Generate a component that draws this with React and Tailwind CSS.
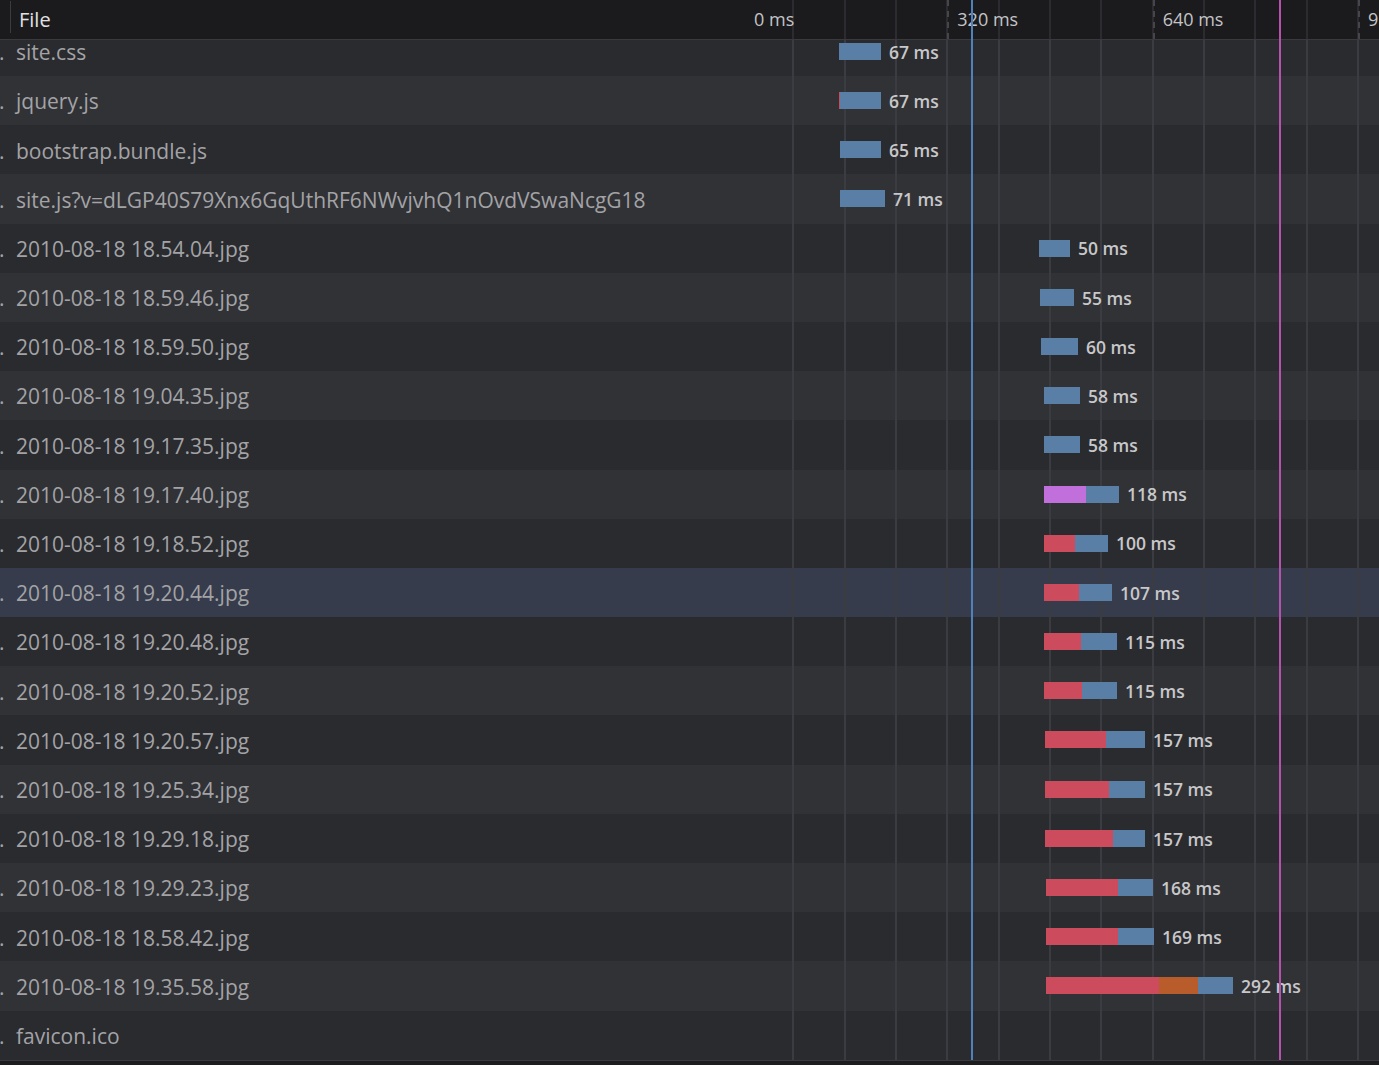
import React from "react";

const BLUE = "#5a7fa6";
const RED = "#cc4b5d";
const PURPLE = "#c06fdb";
const ORANGE = "#b85c2b";
const COL = 743;

const rows = [
  { name: "site.css", x: 839, segs: [[BLUE, 42]], label: "67 ms" },
  { name: "jquery.js", x: 839, segs: [[RED, 1], [BLUE, 41]], label: "67 ms" },
  { name: "bootstrap.bundle.js", x: 840, segs: [[BLUE, 41]], label: "65 ms" },
  { name: "site.js?v=dLGP40S79Xnx6GqUthRF6NWvjvhQ1nOvdVSwaNcgG18", x: 840, segs: [[BLUE, 45]], label: "71 ms" },
  { name: "2010-08-18 18.54.04.jpg", x: 1039, segs: [[BLUE, 31]], label: "50 ms" },
  { name: "2010-08-18 18.59.46.jpg", x: 1040, segs: [[BLUE, 34]], label: "55 ms" },
  { name: "2010-08-18 18.59.50.jpg", x: 1041, segs: [[BLUE, 37]], label: "60 ms" },
  { name: "2010-08-18 19.04.35.jpg", x: 1044, segs: [[BLUE, 36]], label: "58 ms" },
  { name: "2010-08-18 19.17.35.jpg", x: 1044, segs: [[BLUE, 36]], label: "58 ms" },
  { name: "2010-08-18 19.17.40.jpg", x: 1044, segs: [[PURPLE, 42], [BLUE, 33]], label: "118 ms" },
  { name: "2010-08-18 19.18.52.jpg", x: 1044, segs: [[RED, 31], [BLUE, 33]], label: "100 ms" },
  { name: "2010-08-18 19.20.44.jpg", x: 1044, segs: [[RED, 35], [BLUE, 33]], label: "107 ms", selected: true },
  { name: "2010-08-18 19.20.48.jpg", x: 1044, segs: [[RED, 37], [BLUE, 36]], label: "115 ms" },
  { name: "2010-08-18 19.20.52.jpg", x: 1044, segs: [[RED, 38], [BLUE, 35]], label: "115 ms" },
  { name: "2010-08-18 19.20.57.jpg", x: 1045, segs: [[RED, 61], [BLUE, 39]], label: "157 ms" },
  { name: "2010-08-18 19.25.34.jpg", x: 1045, segs: [[RED, 64], [BLUE, 36]], label: "157 ms" },
  { name: "2010-08-18 19.29.18.jpg", x: 1045, segs: [[RED, 68], [BLUE, 32]], label: "157 ms" },
  { name: "2010-08-18 19.29.23.jpg", x: 1046, segs: [[RED, 72], [BLUE, 35]], label: "168 ms" },
  { name: "2010-08-18 18.58.42.jpg", x: 1046, segs: [[RED, 72], [BLUE, 36]], label: "169 ms" },
  { name: "2010-08-18 19.35.58.jpg", x: 1046, segs: [[RED, 113], [ORANGE, 39], [BLUE, 35]], label: "292 ms" },
  { name: "favicon.ico", x: null, segs: [], label: "" },
];

const ticks = ["0 ms", "320 ms", "640 ms", "9"];

function Row({ r, i }) {
  const bg = r.selected ? "bg-[#363c4b]" : i % 2 === 0 ? "bg-[#2a2b2f]" : "bg-[#313236]";
  return (
    <div className={`flex h-[49.2px] ${bg}`}>
      <div className="w-[743px] shrink-0 flex items-center pt-[3px] text-[21px] text-[#a3a3a6] whitespace-nowrap overflow-hidden">
        <span className="w-[17px] shrink-0 -ml-[1px]">.</span>
        <span>{r.name}</span>
      </div>
      <div className="relative flex-1 bg-[repeating-linear-gradient(to_right,transparent_0px,transparent_49.5px,#3b3c41_49.5px,#3b3c41_51.33px)]">
        {r.x !== null && (
          <div className="absolute top-[16px] h-[17px] flex items-center" style={{ left: r.x - COL }}>
            {r.segs.map(([c, w], k) => (
              <div key={k} className="h-[17px]" style={{ width: w, background: c }} />
            ))}
            <span className="ml-[8px] text-[17.5px] font-semibold text-[#c8c8ca] whitespace-nowrap leading-none pt-[2px]">
              {r.label}
            </span>
          </div>
        )}
      </div>
    </div>
  );
}

export default function App() {
  return (
    <div className="relative w-[1379px] h-[1065px] overflow-hidden bg-[#1d1d20] font-['Open_Sans',sans-serif]">
      {/* header */}
      <div className="relative z-10 flex h-[40px] bg-[#1b1b1e] border-b border-[#3a3a3e]">
        <div className="w-[743px] shrink-0 flex items-center">
          <span className="ml-[10px] w-[1px] h-[32px] -mt-[6px] bg-[#3c3c40]" />
          <span className="ml-[8px] text-[20px] text-[#e2e2e4]">File</span>
        </div>
        <div className="flex-1 flex bg-[repeating-linear-gradient(to_right,transparent_0px,transparent_49.5px,#2c2c30_49.5px,#2c2c30_51.33px)]">
          <div className="w-[204.33px] shrink-0 h-full flex items-center pl-[11px] text-[18px] text-[#c4c4c6] whitespace-nowrap">
            {ticks[0]}
          </div>
          {ticks.slice(1).map((t, k) => (
            <div
              key={k}
              className="w-[205.33px] shrink-0 h-full border-l-2 border-dashed border-[#45454a] flex items-center pl-[8px] text-[18px] text-[#c4c4c6] whitespace-nowrap overflow-hidden"
            >
              <span>{t}</span>
            </div>
          ))}
        </div>
      </div>

      {/* body */}
      <div className="relative h-[1020px] overflow-hidden">
        <div className="-mt-[13.2px]">
          {rows.map((r, i) => (
            <Row key={i} r={r} i={i} />
          ))}
        </div>
      </div>
      <div className="h-[5px] border-t border-[#3a3a3e] bg-[#1d1d20]" />

      {/* markers */}
      <div className="absolute top-0 bottom-[5px] left-[971px] w-[2px] bg-[#4f82bd] z-20" />
      <div className="absolute top-0 bottom-[5px] left-[1279px] w-[2px] bg-[#b552b0] z-20" />
    </div>
  );
}
